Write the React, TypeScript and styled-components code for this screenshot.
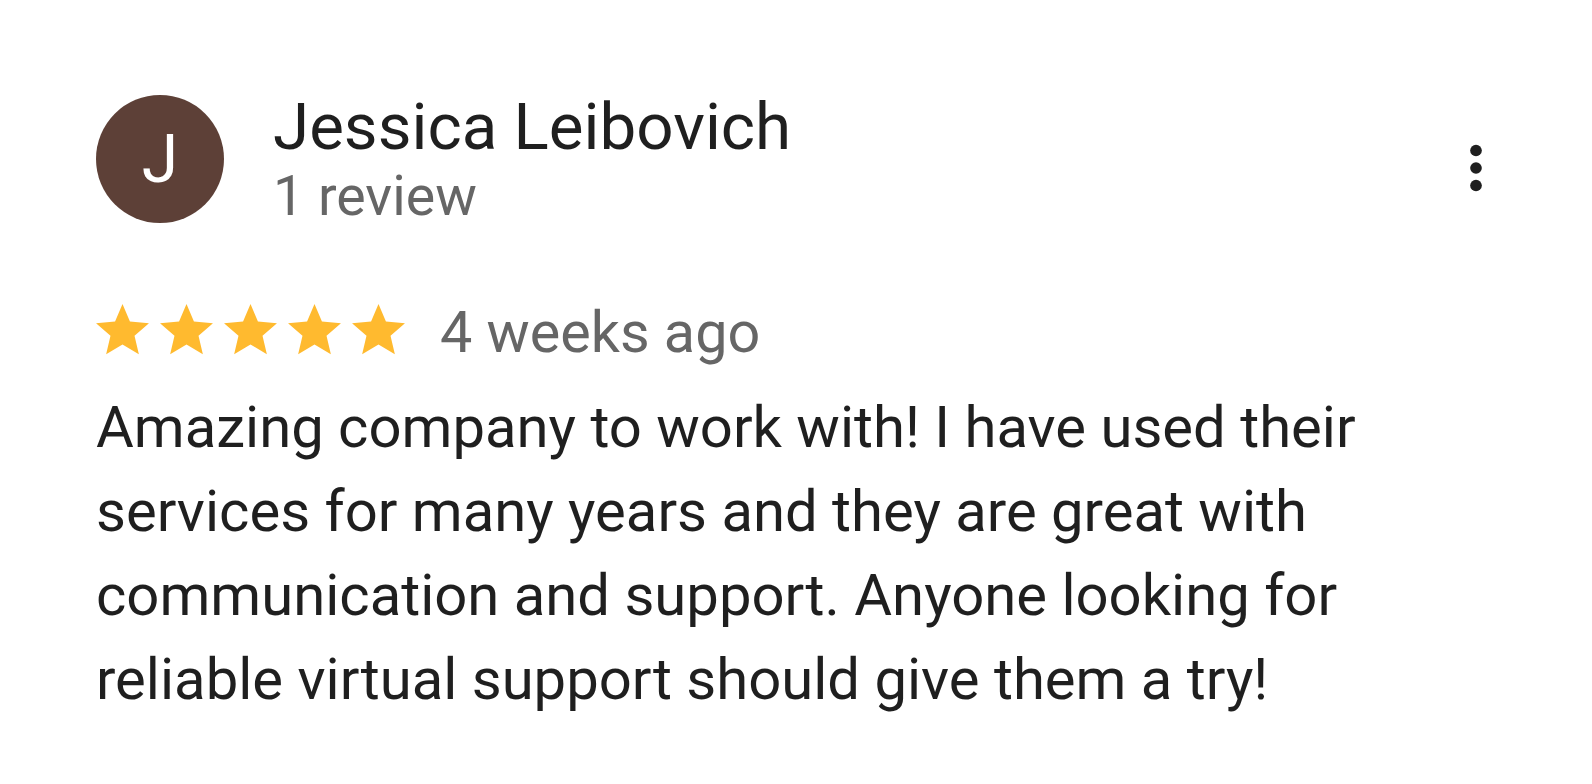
import styled, {createGlobalStyle} from "styled-components"

const GlobalStyle = createGlobalStyle`
  html, body {
    margin: 0;
    padding: 0;
    background: #ffffff;
  }
  body {
    font-family: Roboto, "Noto Sans", Arial, sans-serif;
    -webkit-font-smoothing: antialiased;
  }
`

const Star = () => (
  <StarIcon viewBox="2 2 20 19.27" aria-hidden="true">
    <path d="M12 17.27L18.18 21l-1.64-7.03L22 9.24l-7.19-.61L12 2 9.19 8.63 2 9.24l5.46 4.73L5.82 21z" />
  </StarIcon>
)

const MoreIcon = () => (
  <Kebab viewBox="0 0 24 24" aria-label="More options">
    <circle cx="12" cy="6" r="2" />
    <circle cx="12" cy="12" r="2" />
    <circle cx="12" cy="18" r="2" />
  </Kebab>
)

const review = {
  name: "Jessica Leibovich",
  meta: "1 review",
  rating: 5,
  when: "4 weeks ago",
  text: "Amazing company to work with! I have used their services for many years and they are great with communication and support. Anyone looking for reliable virtual support should give them a try!",
}

export default function App() {
  return (
    <>
      <GlobalStyle />
      <Card>
        <Header>
          <Avatar>{review.name[0]}</Avatar>
          <Info>
            <Name>{review.name}</Name>
            <Meta>{review.meta}</Meta>
          </Info>
          <MoreIcon />
        </Header>
        <RatingRow>
          <Stars>
            {Array.from({length: review.rating}).map((_, i) => <Star key={i} />)}
          </Stars>
          <When>{review.when}</When>
        </RatingRow>
        <Body>{review.text}</Body>
      </Card>
    </>
  )
}

const Card = styled.div`
  padding: 95px 81px 0 96px;
  display: flex;
  flex-direction: column;
`

const Header = styled.div`
  display: flex;
  align-items: flex-start;
`

const Avatar = styled.div`
  width: 128px;
  height: 128px;
  border-radius: 50%;
  background: #5d4037;
  color: #ffffff;
  font-size: 66px;
  font-weight: 400;
  display: flex;
  align-items: center;
  justify-content: center;
  flex-shrink: 0;
`

const Info = styled.div`
  display: flex;
  flex-direction: column;
  margin-left: 49px;
  flex: 1;
`

const Name = styled.div`
  font-size: 65.5px;
  line-height: 64px;
  color: #1f1f1f;
`

const Meta = styled.div`
  font-size: 55.5px;
  line-height: 76px;
  color: #666666;
`

const Kebab = styled.svg`
  width: 70px;
  height: 70px;
  margin-top: 38px;
  fill: #1f1f1f;
  flex-shrink: 0;
`

const RatingRow = styled.div`
  display: flex;
  align-items: flex-start;
  margin-top: 69px;
`

const Stars = styled.div`
  display: flex;
  gap: 11px;
`

const StarIcon = styled.svg`
  width: 53px;
  height: 51px;
  fill: #ffba2f;
`

const When = styled.div`
  margin-left: 35px;
  padding-top: 3px;
  font-size: 57.5px;
  line-height: 52px;
  color: #666666;
`

const Body = styled.p`
  margin: 26px 0 0;
  width: 1300px;
  font-size: 58px;
  line-height: 84px;
  color: #1f1f1f;
`
